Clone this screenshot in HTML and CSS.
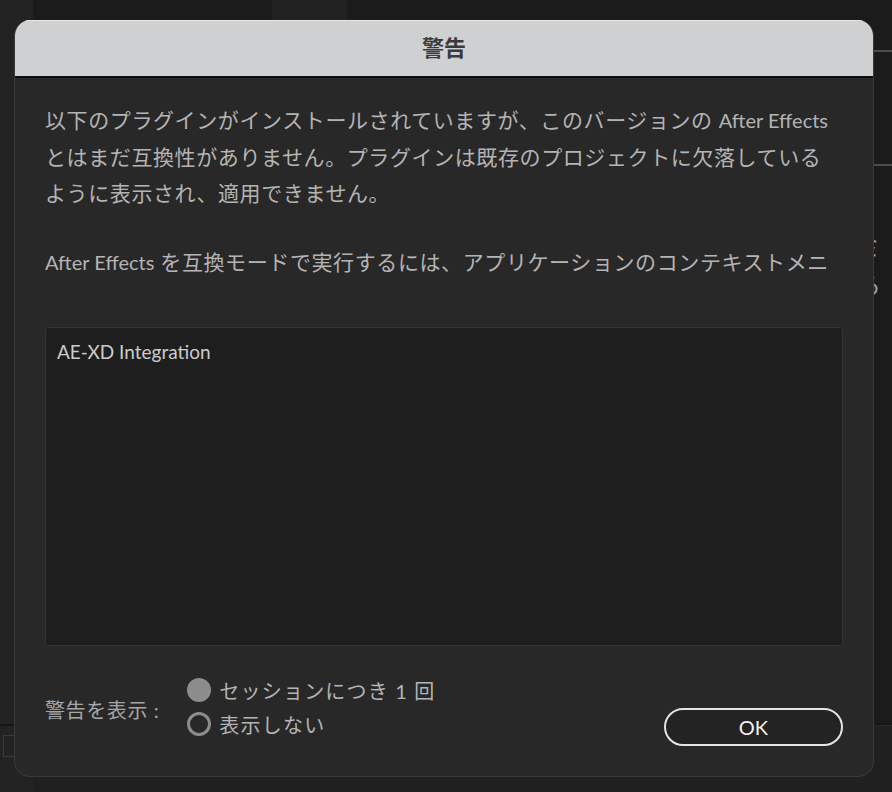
FILE: index.html
```html
<!DOCTYPE html>
<html lang="ja">
<head>
    <meta charset="UTF-8">
    <title>警告</title>
    <link rel="stylesheet" href="styles.css">
</head>
<body>
    <div class="workspace">
        <div class="rail">
            <div class="rail-line"></div>
            <div class="rail-icon"></div>
        </div>
        <div class="stage">
            <div class="stage-top">
                <div class="tab"></div>
            </div>
            <div class="stage-body">
                <div class="side-panel">
                    <div class="side-rule first"></div>
                    <div class="side-rule"></div>
                    <div class="side-text">ミ<br>ら</div>
                </div>
            </div>
            <div class="stage-foot"></div>
        </div>
    </div>

    <div class="dialog">
        <div class="dialog-title">警告</div>
        <div class="dialog-body">
            <div class="message">
                <p>以下のプラグインがインストールされていますが、このバージョンの <span class="app">After Effects</span> とはまだ互換性がありません。プラグインは既存のプロジェクトに欠落しているように表示され、適用できません。</p>
                <p><span class="app">After Effects</span> を互換モードで実行するには、アプリケーションのコンテキストメニューから「互換モードで開く」を選択してください。</p>
            </div>

            <div class="plugin-list">
                <div class="plugin-item">AE-XD Integration</div>
            </div>

            <div class="footer">
                <div class="show-label">警告を表示 :</div>
                <div class="radio-group">
                    <label class="radio"><span class="dot checked"></span>セッションにつき 1 回</label>
                    <label class="radio"><span class="dot"></span>表示しない</label>
                </div>
                <button class="ok-button">OK</button>
            </div>
        </div>
    </div>
</body>
</html>
```

FILE: styles.css
```css
html, body {
    margin: 0;
    padding: 0;
    width: 892px;
    height: 792px;
    overflow: hidden;
    background: #1b1b1b;
    font-family: Lato, "Noto Sans CJK JP", sans-serif;
}

.workspace {
    display: flex;
    height: 792px;
}

.rail {
    width: 33px;
    background: #232323;
    display: flex;
    flex-direction: column;
}

.rail-line {
    margin-top: 724px;
    height: 2px;
    background: #161616;
}

.rail-icon {
    margin: 9px 0 0 3px;
    width: 11px;
    height: 20px;
    border: 1px solid #3a3a3a;
}

.stage {
    flex: 1;
    display: flex;
    flex-direction: column;
}

.stage-top {
    height: 20px;
    display: flex;
}

.tab {
    margin-left: 239px;
    width: 75px;
    background: #222222;
}

.stage-body {
    flex: 1;
    display: flex;
    justify-content: flex-end;
    border-bottom: 2px solid #161616;
}

.side-panel {
    width: 40px;
    display: flex;
    flex-direction: column;
}

.side-rule {
    height: 2px;
    background: #4c4c4c;
    margin-top: 112px;
}

.side-rule.first {
    margin-top: 30px;
}

.side-text {
    margin-top: 62px;
    margin-left: 5px;
    color: #9a9a9a;
    font-size: 24px;
    line-height: 38px;
}

.stage-foot {
    height: 66px;
    background: #202020;
    border-top: 1px solid #2a2a2a;
}

/* dialog */

.dialog {
    position: absolute;
    left: 14px;
    top: 20px;
    width: 860px;
    height: 757px;
    box-sizing: border-box;
    background: #282828;
    border: 1px solid #3a3a3a;
    border-top: none;
    border-radius: 16px;
    overflow: hidden;
    display: flex;
    flex-direction: column;
}

.dialog-title {
    height: 55px;
    line-height: 54px;
    background: #cfd0d2;
    border-top: 1px solid #e6e6e6;
    border-bottom: 2px solid #0e0e0e;
    text-align: center;
    color: #3a3a3a;
    font-size: 22px;
    font-weight: bold;
    margin: 0 -1px;
}

.dialog-body {
    flex: 1;
    padding: 24px 30px 0 30px;
    display: flex;
    flex-direction: column;
}

.message {
    width: 790px;
    height: 181px;
    overflow: hidden;
    color: #b4b4b4;
    font-size: 21px;
    line-height: 36.5px;
    letter-spacing: 0.6px;
}

.message p {
    margin: 0 0 32px 0;
}

.message .app {
    font-size: 20px;
    letter-spacing: 0;
}

.plugin-list {
    margin-top: 44px;
    height: 317px;
    background: #1e1e1e;
    border: 1px solid #333333;
    border-radius: 3px;
}

.plugin-item {
    padding: 12px 11px;
    color: #cccccc;
    font-size: 19px;
    line-height: 24px;
}

.footer {
    margin-top: 27px;
    display: flex;
    align-items: center;
    color: #b4b4b4;
    font-size: 20px;
}

.show-label {
    color: #a6a6a6;
    letter-spacing: 0.6px;
    margin-top: 4px;
}

.radio-group {
    margin-left: 28px;
    display: flex;
    flex-direction: column;
}

.radio {
    display: flex;
    align-items: center;
    height: 34px;
    letter-spacing: 1.2px;
}

.dot {
    width: 24px;
    height: 24px;
    box-sizing: border-box;
    border-radius: 50%;
    border: 3px solid #8c8c8c;
    margin-right: 8px;
}

.dot.checked {
    background: #8c8c8c;
}

.ok-button {
    margin-left: auto;
    align-self: flex-end;
    margin-bottom: -5px;
    width: 179px;
    height: 38px;
    border: 2.5px solid #e4e4e4;
    border-radius: 20px;
    background: #232323;
    color: #f2f2f2;
    font-family: Lato, sans-serif;
    font-size: 20px;
}
```
